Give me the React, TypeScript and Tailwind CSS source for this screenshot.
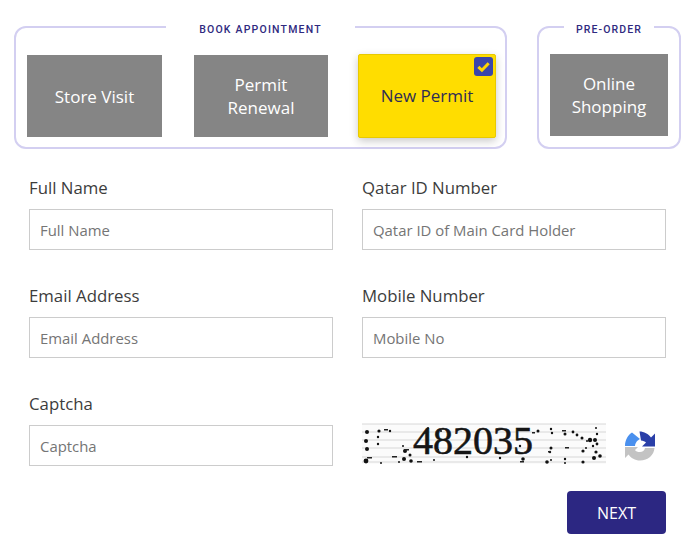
const dots = [
  [367, 432, 2], [366, 441, 2], [367, 449, 2], [366, 461, 2.4], [379, 431, 1.6], [378, 437, 1.2], [378, 444, 1.2],
  [405, 451, 2], [404, 459, 2], [410, 455, 1.5], [411, 461, 1.8], [403, 446, 1], [390, 431, 1.2], [399, 462, 1],
  [434, 460, 1], [467, 457, 1.2], [500, 458, 1.2], [523, 459, 1.8], [538, 431, 1.5], [551, 429, 1.2], [552, 433, 1.2],
  [551, 448, 1.5], [550, 452, 1.2], [551, 460, 1], [565, 434, 1.5], [573, 432, 1.4], [565, 459, 1.2], [565, 463, 1],
  [577, 435, 1.4], [582, 438, 1.5], [587, 441, 1], [586, 448, 1], [583, 451, 1.6], [590, 440, 2.2], [595, 440, 2],
  [597, 444, 1.4], [593, 446, 1.2], [596, 428, 1], [597, 434, 1.2], [596, 452, 1.6], [600, 456, 1.8], [594, 458, 2],
  [583, 462, 1.6], [547, 462, 1.8], [441, 431, 1], [478, 451, 1], [520, 446, 1.2], [428, 428, 1], [381, 463, 1],
];

const dashes = [
  [367, 457, 5], [392, 456, 5], [417, 461, 5], [404, 449, 5], [384, 429, 4],
  [562, 430, 4], [565, 447, 4], [548, 451, 3], [532, 432, 3], [520, 461, 4], [436, 449, 3],
];

// noisy captcha image, digits stay real text
function CaptchaImage() {
  return (
    <svg viewBox="362 416 244 48" className="h-12 w-[244px] shrink-0">
      <rect x="362" y="424" width="244" height="40" fill="#fbfbfb" />
      {[424, 432, 440, 448, 457, 462].map((y) => (
        <line key={y} x1="362" x2="606" y1={y} y2={y} stroke="#cfcfcf" strokeWidth="0.8" />
      ))}
      <text x="413" y="454" fontFamily="'Liberation Serif', serif" fontSize="39" fill="#151515" stroke="#151515" strokeWidth="0.6" textLength="120" lengthAdjust="spacingAndGlyphs">
        482035
      </text>
      {dots.map(([cx, cy, r], i) => (
        <circle key={i} cx={cx} cy={cy} r={r} fill="#111" />
      ))}
      {dashes.map(([x, y, w], i) => (
        <rect key={i} x={x} y={y} width={w} height="1.5" fill="#222" />
      ))}
    </svg>
  );
}

function RecaptchaIcon() {
  return (
    <svg viewBox="0 0 30 30" className="h-[30px] w-[30px] shrink-0">
      <path d="M0 15 C0 9 3 4 7 1.5 L15 8 C12.5 9.5 10.5 11 10 15 Z" fill="#4a90ee" />
      <path d="M14.5 0.5 C19 0.5 23.5 3 26 6.5 L30 2.5 V15.5 H17 L21 11.5 C20 10.5 18 9.5 16 9.5 Z" fill="#2a3fa8" />
      <path d="M0 16 H13 L10 19 C11 20.5 12.5 21 15 21 C17.5 21 19.5 19.5 20 17 H29.5 C29 24 23 29.5 15 29.5 C10 29.5 6 27 3.5 23.5 L0 27 Z" fill="#c3c3c3" />
    </svg>
  );
}

function OptionTile({
  label,
  className,
}: {
  label: string;
  className: string;
}) {
  return (
    <button
      type="button"
      className={`flex h-[82px] items-center justify-center bg-[#858585] px-4 text-center font-['Open_Sans',sans-serif] text-[17px] leading-[23px] text-white ${className}`}
    >
      {label}
    </button>
  );
}

function Field({
  label,
  placeholder,
}: {
  label: string;
  placeholder: string;
}) {
  return (
    <label className="block">
      <span className="block text-[16.8px] leading-[22px] text-[#3c3c3c]">
        {label}
      </span>
      <input
        placeholder={placeholder}
        className="mt-2.5 block h-[41px] w-full border border-[#cccccc] bg-white px-2.5 text-[14.9px] text-[#444] outline-none placeholder:text-[#757575]"
      />
    </label>
  );
}

export default function App() {
  return (
    <div className="h-[549px] w-[700px] overflow-hidden bg-white font-['Open_Sans',sans-serif]">
      <div className="flex gap-[30px] pl-[14px] pt-[15px]">
        <fieldset className="h-[134px] w-[493px] rounded-xl border-2 border-[#d3cff1]">
          <legend className="mx-auto px-[33px] pt-[7px] font-['Roboto',sans-serif] text-[10.5px] font-medium leading-[16px] tracking-[1.2px] text-[#2f2a80]">
            BOOK APPOINTMENT
          </legend>
          <div className="flex items-center pl-[11px] pt-[16px]">
            <OptionTile label="Store Visit" className="w-[135px]" />
            <OptionTile label="Permit Renewal" className="ml-8 w-[134px]" />
            <button
              type="button"
              className="relative ml-[30px] flex h-[84px] w-[138px] items-center justify-center rounded-[2px] border border-[#e8c900] bg-[#ffdd00] text-[17px] text-[#2f2d55] shadow-[0_3px_8px_rgba(0,0,0,0.22)]"
            >
              New Permit
              <span className="absolute right-[2px] top-[2px] flex h-[19px] w-[19px] items-center justify-center rounded-[3px] bg-[#3a46ab]">
                <svg viewBox="0 0 16 16" className="h-[15px] w-[15px]">
                  <path d="M2.5 8.5 L6.3 12 L13.5 4.5" fill="none" stroke="#ffd600" strokeWidth="3.2" />
                </svg>
              </span>
            </button>
          </div>
        </fieldset>
        <fieldset className="h-[134px] w-[144px] rounded-xl border-2 border-[#d3cff1]">
          <legend className="mx-auto px-3 pt-[7px] font-['Roboto',sans-serif] text-[10.5px] font-medium leading-[16px] tracking-[1.1px] text-[#2f2a80]">
            PRE-ORDER
          </legend>
          <div className="pl-[11px] pt-[16px]">
            <OptionTile label="Online Shopping" className="w-[118px]" />
          </div>
        </fieldset>
      </div>

      <form className="grid grid-cols-[304px_304px] gap-x-[29px] gap-y-[35px] pl-[29px] pt-[28px]">
        <Field label="Full Name" placeholder="Full Name" />
        <Field label="Qatar ID Number" placeholder="Qatar ID of Main Card Holder" />
        <Field label="Email Address" placeholder="Email Address" />
        <Field label="Mobile Number" placeholder="Mobile No" />
        <Field label="Captcha" placeholder="Captcha" />
        <div className="flex items-end">
          <div className="flex items-end pb-[2px]">
            <CaptchaImage />
            <div className="ml-[19px] pb-[3px]">
              <RecaptchaIcon />
            </div>
          </div>
        </div>
      </form>

      <div className="flex justify-end pr-[34px] pt-[25px]">
        <button
          type="button"
          className="h-[43px] w-[99px] rounded bg-[#2c2782] text-base text-white"
        >
          NEXT
        </button>
      </div>
    </div>
  );
}
